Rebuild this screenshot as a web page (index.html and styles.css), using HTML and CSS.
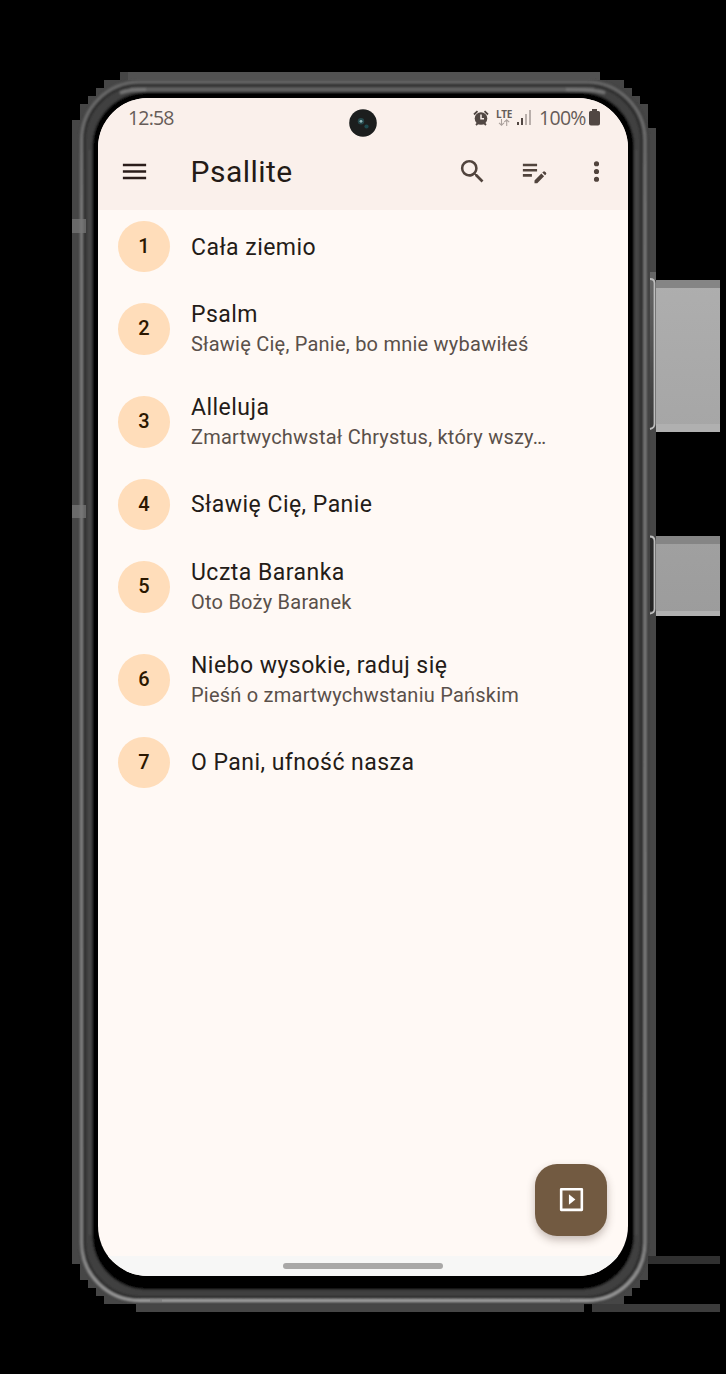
FILE: index.html
```html
<!DOCTYPE html>
<html lang="pl">
<head>
<meta charset="utf-8">
<title>Psallite</title>
<link rel="stylesheet" href="styles.css">
</head>
<body>
<svg class="device" width="726" height="1374" viewBox="0 0 726 1374" aria-hidden="true">
  <defs>
    <linearGradient id="key" x1="0" y1="0" x2="0" y2="1"><stop stop-color="#aeaeae"/><stop offset="1" stop-color="#9c9c9c"/></linearGradient>
    <linearGradient id="slot" x1="0" y1="0" x2="0" y2="1"><stop stop-color="#666"/><stop offset=".5" stop-color="#333"/><stop offset="1" stop-color="#222"/></linearGradient>
    <linearGradient id="rim" x1="0" y1="0" x2="0" y2="1"><stop stop-color="#686868"/><stop offset=".1" stop-color="#787878"/><stop offset=".95" stop-color="#808080"/><stop offset="1" stop-color="#a0a0a0"/></linearGradient>
    <filter id="soft" x="-5%" y="-5%" width="110%" height="110%"><feGaussianBlur stdDeviation=".8"/></filter>
  </defs>
  <path fill="#464646" d="M120 72H600V80H624V88H632V96H640V104H648V128H656V1256H648V1280H640V1288H632V1296H624V1304H584V1312H136V1304H104V1296H96V1288H88V1280H80V1264H72V120H80V104H88V96H96V88H104V80H120Z"/>
  <path fill="#525252" d="M128 72H600V80H128Z"/>
  <path fill="#303030" d="M648 1256H720V1264H648Z"/>
  <path fill="#3c3c3c" d="M592 1304H720V1312H592Z"/>
  <g filter="url(#soft)">
    <rect x="79" y="80" width="570" height="1223" rx="61" fill="#3c3c3c"/>
    <rect x="81.500" y="82" width="563.500" height="1218.500" rx="58" fill="none" stroke="url(#rim)" stroke-width="3"/>
    <rect x="84.500" y="85" width="557" height="1212.500" rx="56" fill="#404040" stroke="#292929" stroke-width="2.200"/>
    <path d="M130 89.500H594" fill="none" stroke="#646464" stroke-width="3.500"/>
    <path d="M90 150V1235M636.500 150V1235" fill="none" stroke="#4c4c4c" stroke-width="2"/>
    <rect x="92.500" y="92.500" width="541.500" height="1197" rx="54" fill="#050505"/>
    <path d="M120 93Q128 89.500 146 89.500M605 93Q597 89.500 566 89.500" fill="none" stroke="#787878" stroke-width="3"/>
  </g>
  <path fill="#777" opacity=".75" d="M72 219H86V233H72ZM72 505H86V518H72Z"/>
  <path fill="#777" opacity=".6" d="M150 1299H162V1302H150ZM560 1299H570V1302H560Z"/>
  <path fill="url(#key)" d="M656 280H720V432H656ZM656 536H720V616H656Z"/>
  <path fill="#858585" d="M656 280H720V288H656ZM656 536H720V544H656Z"/>
  <path fill="#b0b0b0" d="M656 424H720V432H656ZM656 611H720V616H656Z"/>
  <path fill="#666" d="M650 272H656V280H650Z"/>
  <path fill="url(#slot)" d="M650 280H654V427H650ZM650 538H654V611H650Z"/>
  <path fill="none" stroke="#bdbdbd" stroke-width="1.800" d="M650 279Q654.500 279 654.500 283V424Q654.500 428 650 429M650 536.500Q654.500 536.500 654.500 541V609Q654.500 613 650 613.500"/>
</svg>
<main class="screen">
  <div class="status">
    <time class="clock">12:58</time>
    <div class="indicators">
      <svg class="alarm" width="16" height="16" viewBox="0 0 16 16"><circle cx="8" cy="8.500" r="6.300" fill="#514743"/><path d="M1 4.500L4.500 1.200M15 4.500L11.500 1.200M3 15l2-2M13 15l-2-2" stroke="#514743" stroke-width="1.800"/><path d="M8 4.500V8.700H11" fill="none" stroke="#faefeb" stroke-width="1.500"/></svg>
      <div class="network"><span class="lte">LTE</span><svg width="12" height="7" viewBox="0 0 12 7"><path d="M3.500 0V6M1 3.800L3.500 6.200 6 3.800M8.700 7V1M6.200 3.200L8.700.8 11.200 3.200" fill="none" stroke="#aaa09c" stroke-width="1.100"/></svg></div>
      <svg class="signal" width="14" height="15" viewBox="0 0 14 15"><path d="M0 12H2V15H0ZM4 8H6V15H4Z" fill="#514743"/><path d="M8 4H10V15H8ZM12 0H14V15H12Z" fill="#b9afab"/></svg>
      <span class="percent">100%</span>
      <svg class="battery" width="11" height="17" viewBox="0 0 11 17"><path d="M3 0H8V2H9.500Q11 2 11 3.500V14.500Q11 16.500 9 16.500H2Q0 16.500 0 14.500V3.500Q0 2 1.500 2H3Z" fill="#514743"/></svg>
    </div>
  </div>
  <header class="bar">
    <svg class="menu" width="31" height="31" viewBox="0 0 24 24"><path fill="#2a1d1a" d="M3 18h18v-2H3v2zm0-5h18v-2H3v2zm0-7v2h18V6H3z"/></svg>
    <h1 class="title">Psallite</h1>
    <nav class="actions">
      <svg width="31" height="31" viewBox="0 0 24 24"><path fill="#51443d" d="M15.500 14h-.79l-.28-.27A6.471 6.471 0 0 0 16 9.500 6.500 6.500 0 1 0 9.500 16c1.610 0 3.090-.59 4.230-1.570l.27.28v.79l5 4.990L20.490 19l-4.990-5zm-6 0C7.010 14 5 11.990 5 9.500S7.010 5 9.500 5 14 7.010 14 9.500 11.990 14 9.500 14z"/></svg>
      <svg width="31" height="31" viewBox="0 0 24 24"><path fill="#51443d" d="M3 10h11v2H3v-2zm0-2h11V6H3v2zm0 8h7v-2H3v2zm15.010-3.130.71-.71a.996.996 0 0 1 1.410 0l.71.71c.39.390.39 1.020 0 1.410l-.71.71-2.120-2.120zm-.71.71-5.300 5.300V21h2.120l5.300-5.300-2.120-2.120z"/></svg>
      <svg width="31" height="31" viewBox="0 0 24 24"><path fill="#51443d" d="M12 8a2 2 0 1 0 0-4 2 2 0 0 0 0 4zm0 2a2 2 0 1 0 0 4 2 2 0 0 0 0-4zm0 6a2 2 0 1 0 0 4 2 2 0 0 0 0-4z"/></svg>
    </nav>
  </header>
  <ul class="songs">
    <li class="song"><span class="num">1</span><div><p class="name">Cała ziemio</p></div></li>
    <li class="song two"><span class="num">2</span><div><p class="name">Psalm</p><p class="sub">Sławię Cię, Panie, bo mnie wybawiłeś</p></div></li>
    <li class="song two"><span class="num">3</span><div><p class="name">Alleluja</p><p class="sub">Zmartwychwstał Chrystus, który wszy…</p></div></li>
    <li class="song"><span class="num">4</span><div><p class="name">Sławię Cię, Panie</p></div></li>
    <li class="song two"><span class="num">5</span><div><p class="name">Uczta Baranka</p><p class="sub">Oto Boży Baranek</p></div></li>
    <li class="song two"><span class="num">6</span><div><p class="name">Niebo wysokie, raduj się</p><p class="sub">Pieśń o zmartwychwstaniu Pańskim</p></div></li>
    <li class="song"><span class="num">7</span><div><p class="name">O Pani, ufność nasza</p></div></li>
  </ul>
  <button class="fab" aria-label="Start"><svg width="31" height="31" viewBox="0 0 24 24"><path fill="none" stroke="#fff" stroke-width="2" stroke-linejoin="round" d="M4 4H20V20H4Z"/><path fill="#fff" d="M10 8L15 12 10 16Z"/></svg></button>
  <footer class="navbar"><span class="handle"></span></footer>
  <svg class="camera" width="28" height="28" viewBox="0 0 28 28"><circle cx="14" cy="14" r="13.800" fill="#1c1e1e"/><circle cx="12" cy="12.300" r="3.200" fill="#25474b"/><circle cx="12" cy="12.300" r="1.400" fill="#93b8ba"/><circle cx="17.500" cy="17.500" r="2.100" fill="#1e4b50"/></svg>
</main>
</body>
</html>
```
FILE: styles.css
```css
* { box-sizing: border-box; }
body {
  margin: 0;
  width: 726px;
  height: 1374px;
  padding: 98px 0 0 98px;
  overflow: hidden;
  background: #000;
  font-family: Roboto, sans-serif;
}
svg { display: block; flex: none; }
p, h1, ul { margin: 0; padding: 0; font-weight: 400; }
.device { position: absolute; left: 0; top: 0; }
.screen {
  position: relative;
  display: flex;
  flex-direction: column;
  width: 530px;
  height: 1178px;
  border-radius: 50px;
  overflow: hidden;
  background: #fff9f5;
}
.status {
  display: flex;
  justify-content: space-between;
  height: 39px;
  padding: 0 28px 0 30px;
  background: #faf0eb;
  color: #665c58;
  font: 19.500px/39px "Open Sans", sans-serif;
}
.clock { letter-spacing: -0.800px; }
.indicators { display: flex; align-items: center; }
.alarm { margin-right: 7px; }
.network { display: flex; flex-direction: column; align-items: center; width: 16px; margin-right: 5px; }
.lte { font-size: 10px; line-height: 9px; font-weight: 700; letter-spacing: -0.300px; }
.signal { margin-right: 8px; }
.percent { width: 50px; letter-spacing: -0.700px; white-space: nowrap; }
.bar {
  display: flex;
  align-items: center;
  height: 73px;
  padding: 0 16px 4px 20.600px;
  background: #faf0eb;
}
.title { margin-left: 41px; font-size: 30px; line-height: 36px; letter-spacing: 0.450px; color: #241a16; }
.actions { display: flex; gap: 31px; margin-left: auto; }
.songs { list-style: none; flex: 1; padding-top: 0.600px; }
.song { display: flex; align-items: center; gap: 21.300px; height: 72.200px; padding-left: 20.200px; }
.two { height: 92.800px; }
.num {
  width: 51.500px;
  height: 51.500px;
  border-radius: 50%;
  background: #ffddba;
  color: #2b1700;
  font-size: 20px;
  font-weight: 500;
  line-height: 51px;
  text-align: center;
}
.name { padding-top: 1px; font-size: 23px; line-height: 31px; letter-spacing: 0.470px; color: #241c18; }
.two .name { margin-top: -1px; }
.sub { font-size: 20px; line-height: 29px; letter-spacing: 0.230px; color: #5a504a; }
.fab {
  position: absolute;
  left: 437px;
  top: 1066px;
  display: grid;
  place-items: center;
  width: 72px;
  height: 72px;
  padding: 0 0 1px 1px;
  border: 0;
  border-radius: 22px;
  background: #725a41;
  box-shadow: 0 4px 8px rgba(60, 40, 30, 0.300);
}
.navbar { display: flex; justify-content: center; height: 20px; padding-top: 7px; background: #f7f7f6; }
.handle { width: 160px; height: 6px; border-radius: 3px; background: #a9a8a7; }
.camera { position: absolute; left: 251px; top: 11px; }
```
